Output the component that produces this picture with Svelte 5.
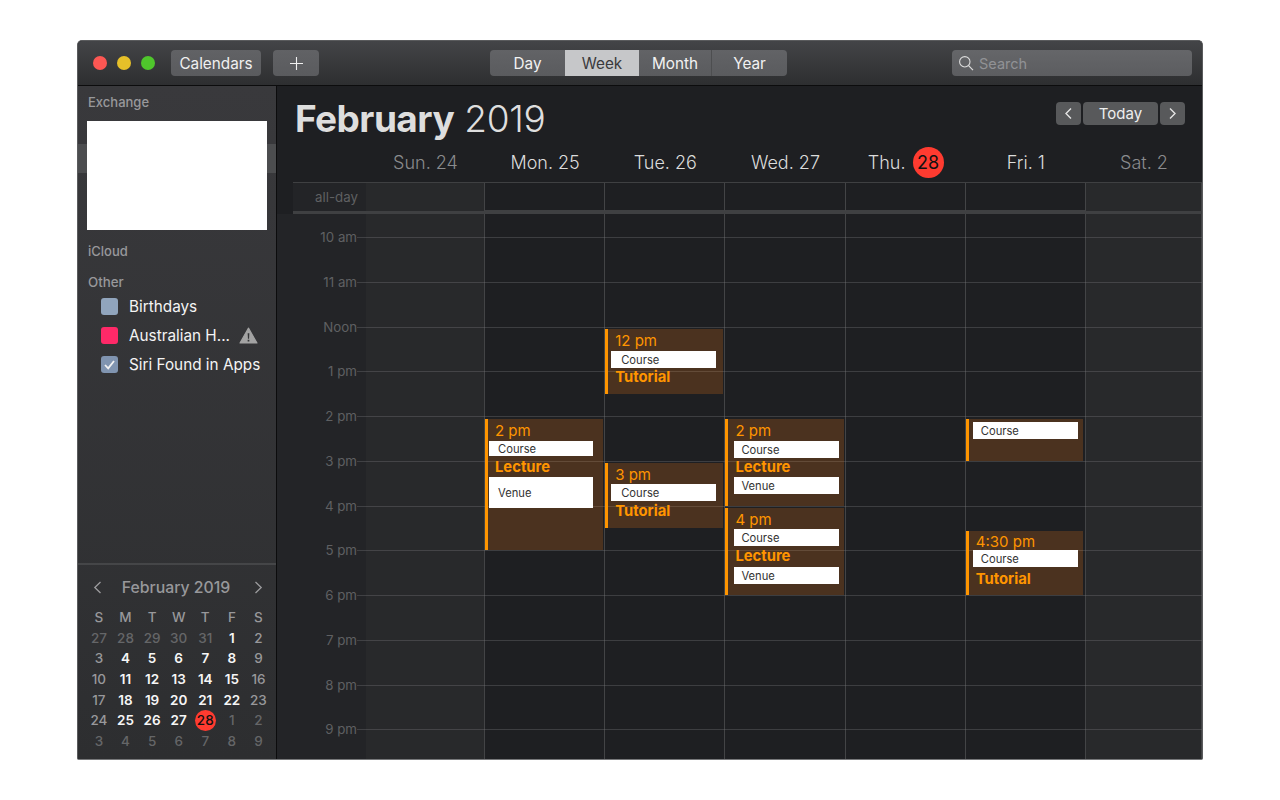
<script lang="ts">
	const days = [
		{ label: 'Sun. 24', tone: 'weekend' },
		{ label: 'Mon. 25', tone: '' },
		{ label: 'Tue. 26', tone: '' },
		{ label: 'Wed. 27', tone: '' },
		{ label: 'Thu.', today: '28', tone: '' },
		{ label: 'Fri. 1', tone: '' },
		{ label: 'Sat. 2', tone: 'weekend' }
	];

	const hours = ['10 am', '11 am', 'Noon', '1 pm', '2 pm', '3 pm', '4 pm', '5 pm', '6 pm', '7 pm', '8 pm', '9 pm'];

	// top and height are px from the top of the hours area, inset, pad and box place the white boxes
	const events = [
		{ col: 1, top: 205, height: 131, width: 118, inset: 1, pad: 9, box: 104, time: '2 pm', kind: 'Lecture', venue: 31, thin: true },
		{ col: 2, top: 115, height: 65, width: 118, inset: 3, pad: 10, box: 105, time: '12 pm', kind: 'Tutorial' },
		{ col: 2, top: 249, height: 65, width: 118, inset: 3, pad: 10, box: 105, time: '3 pm', kind: 'Tutorial', snug: true },
		{ col: 3, top: 205, height: 87, width: 119, inset: 6, pad: 7, box: 105, time: '2 pm', kind: 'Lecture', venue: 17 },
		{ col: 3, top: 294, height: 87, width: 119, inset: 6, pad: 7, box: 105, time: '4 pm', kind: 'Lecture', venue: 17, snug: true },
		{ col: 5, top: 205, height: 42, width: 117, inset: 4, pad: 8, box: 105, kind: '' },
		{ col: 5, top: 317, height: 64, width: 117, inset: 4, pad: 8, box: 105, time: '4:30 pm', kind: 'Tutorial', tight: true }
	];

	const calendars = [
		{ name: 'Birthdays', color: '#91a5bd' },
		{ name: 'Australian H...', color: '#ff2968', warn: true },
		{ name: 'Siri Found in Apps', color: '#8094b0', checked: true }
	];

	const weeks = [
		[27, 28, 29, 30, 31, 1, 2],
		[3, 4, 5, 6, 7, 8, 9],
		[10, 11, 12, 13, 14, 15, 16],
		[17, 18, 19, 20, 21, 22, 23],
		[24, 25, 26, 27, 28, 1, 2],
		[3, 4, 5, 6, 7, 8, 9]
	];

	function dayClass(w: number, d: number) {
		const outside = (w === 0 && d < 5) || (w === 4 && d > 4) || w === 5;
		if (outside) return 'out';
		if (w === 4 && d === 4) return 'today';
		if (d === 0 || d === 6) return 'wknd';
		return 'cur';
	}
</script>

<div class="page">
	<div class="window">
		<header class="toolbar">
			<div class="lights">
				<span class="light red"></span>
				<span class="light yellow"></span>
				<span class="light green"></span>
			</div>
			<button class="tb-btn calendars">Calendars</button>
			<button class="tb-btn plus" aria-label="Add">
				<svg width="15" height="15" viewBox="0 0 15 15"><path d="M7.5 1v13M1 7.5h13" stroke="#f0f0f0" stroke-width="1.1" fill="none" /></svg>
			</button>
			<div class="segments">
				<span class="seg day">Day</span>
				<span class="seg week active">Week</span>
				<span class="seg month">Month</span>
				<span class="seg year">Year</span>
			</div>
			<div class="search">
				<svg width="16" height="16" viewBox="0 0 16 16"><circle cx="6.8" cy="6.8" r="5.2" stroke="#dcdcdc" stroke-width="1.1" fill="none" /><path d="M10.6 10.6l4.4 4.6" stroke="#dcdcdc" stroke-width="1.2" fill="none" /></svg>
				<span>Search</span>
			</div>
		</header>

		<div class="body">
			<aside class="sidebar">
				<div class="group-label first">Exchange</div>
				<div class="exchange">
					<div class="selected-row"></div>
					<div class="redacted"></div>
				</div>
				<div class="group-label">iCloud</div>
				<div class="group-label other">Other</div>
				{#each calendars as cal}
					<div class="cal-row">
						<span class="swatch" style="background: {cal.color}">
							{#if cal.checked}
								<svg width="17" height="17" viewBox="0 0 17 17"><path d="M4 9l3.2 3.4L13 5" stroke="#f2f2f2" stroke-width="1.8" fill="none" /></svg>
							{/if}
						</span>
						<span class="cal-name">{cal.name}</span>
						{#if cal.warn}
							<svg class="warn" width="19" height="17" viewBox="0 0 20 18">
								<path d="M10 1.2L19 17H1z" fill="#a3a3a3" stroke="#a3a3a3" stroke-width="1.2" stroke-linejoin="round" />
								<path d="M9.1 6.5h1.8l-.3 6h-1.2zM9.1 13.6h1.8v1.8H9.1z" fill="#333436" />
							</svg>
						{/if}
					</div>
				{/each}

				<div class="mini">
					<div class="mini-head">
						<svg width="9" height="13" viewBox="0 0 9 13"><path d="M7.5 1L1.8 6.5l5.7 5.5" stroke="#9c9c9e" stroke-width="1.3" fill="none" /></svg>
						<span class="mini-title">February 2019</span>
						<svg width="9" height="13" viewBox="0 0 9 13"><path d="M1.5 1l5.7 5.5L1.5 12" stroke="#9c9c9e" stroke-width="1.3" fill="none" /></svg>
					</div>
					<div class="mini-grid">
						{#each ['S', 'M', 'T', 'W', 'T', 'F', 'S'] as d}
							<span class="dow">{d}</span>
						{/each}
						{#each weeks as week, w}
							{#each week as n, d}
								<span class="mini-day {dayClass(w, d)}">{n}</span>
							{/each}
						{/each}
					</div>
				</div>
			</aside>

			<main class="main">
				<div class="title-row">
					<h1><strong>February</strong> 2019</h1>
					<div class="nav">
						<button class="nav-btn arrow" aria-label="Previous">
							<svg width="9" height="13" viewBox="0 0 9 13"><path d="M7 1.5L2 6.5l5 5" stroke="#e4e4e4" stroke-width="1.4" fill="none" /></svg>
						</button>
						<button class="nav-btn today-btn">Today</button>
						<button class="nav-btn arrow" aria-label="Next">
							<svg width="9" height="13" viewBox="0 0 9 13"><path d="M2 1.5l5 5-5 5" stroke="#e4e4e4" stroke-width="1.4" fill="none" /></svg>
						</button>
					</div>
				</div>

				<div class="cols day-heads">
					<span></span>
					{#each days as day}
						<div class="day-head {day.tone}">
							{day.label}
							{#if day.today}<span class="today-num">{day.today}</span>{/if}
						</div>
					{/each}
				</div>

				<div class="cols allday">
					<div class="gutter allday-label">all-day</div>
					{#each days as day}
						<div class="cell" class:shade={day.tone === 'weekend'}></div>
					{/each}
				</div>

				<div class="cols hours">
					<div class="gutter hour-labels">
						{#each hours as h}
							<div class="hour-label">{h}</div>
						{/each}
					</div>
					{#each days as day, i}
						<div class="cell" class:shade={day.tone === 'weekend'}>
							{#each events.filter((e) => e.col === i) as ev}
								<div
									class="event"
									class:tight={ev.tight}
									class:snug={ev.snug}
									style="top: {ev.top}px; height: {ev.height}px; width: {ev.width}px; --inset: {ev.inset}px; --pad: {ev.pad}px; --box: {ev.box}px"
								>
									{#if ev.time}<div class="ev-time">{ev.time}</div>{/if}
									<div class="ev-box" class:thin={ev.thin}>Course</div>
									{#if ev.kind}<div class="ev-kind">{ev.kind}</div>{/if}
									{#if ev.venue}<div class="ev-box" style="height: {ev.venue}px">Venue</div>{/if}
								</div>
							{/each}
						</div>
					{/each}
					<div class="hour-lines">
						{#each hours as _}
							<div class="hour-line"></div>
						{/each}
					</div>
				</div>
			</main>
		</div>
	</div>
</div>

<style>
	:global(body) {
		margin: 0;
		background: #fff;
	}

	.page {
		width: 1280px;
		height: 800px;
		padding: 40px 77px 0;
		box-sizing: border-box;
		font-family: Inter, 'Liberation Sans', sans-serif;
		overflow: hidden;
	}

	.window {
		width: 1126px;
		height: 720px;
		box-sizing: border-box;
		border: 1px solid #5a5b5d;
		border-bottom-color: #77787a;
		border-radius: 5px 5px 2px 2px;
		overflow: hidden;
		display: flex;
		flex-direction: column;
		background: #1e1f22;
	}

	button {
		font-family: inherit;
		border: 0;
		padding: 0;
		margin: 0;
	}

	.toolbar {
		flex: none;
		height: 45px;
		box-sizing: border-box;
		display: flex;
		align-items: flex-start;
		padding-top: 9px;
		background: linear-gradient(#434447, #2d2e30);
		border-bottom: 1px solid #0c0c0d;
	}

	.lights {
		display: flex;
		gap: 10px;
		margin: 6px 0 0 15px;
	}

	.light {
		width: 14px;
		height: 14px;
		border-radius: 50%;
	}

	.red { background: #fc5753; }
	.yellow { background: #e6c029; }
	.green { background: #4fc62c; }

	.tb-btn {
		height: 26px;
		border-radius: 4px;
		background: linear-gradient(#616265, #5a5b5e);
		color: #f0f0f0;
		font-size: 15.3px;
		display: flex;
		align-items: center;
		justify-content: center;
	}

	.calendars {
		width: 90px;
		margin-left: 16px;
	}

	.plus {
		width: 46px;
		margin-left: 12px;
	}

	.segments {
		display: flex;
		height: 26px;
		margin-left: 171px;
		border-radius: 4px;
		overflow: hidden;
		background: linear-gradient(#626366, #5a5b5e);
		color: #f2f2f2;
		font-size: 15.3px;
	}

	.seg {
		display: flex;
		align-items: center;
		justify-content: center;
	}

	.day { width: 75px; }
	.week { width: 74px; }
	.month { width: 72px; border-right: 1px solid #4d4e50; }
	.year { width: 75px; }

	.active {
		background: #c6c7c9;
		color: #3a3a3c;
	}

	.search {
		display: flex;
		align-items: center;
		gap: 5px;
		width: 240px;
		height: 26px;
		box-sizing: border-box;
		margin-left: 165px;
		padding-left: 6px;
		border-radius: 4px;
		background: linear-gradient(#656669, #5c5d60);
		color: #919295;
		font-size: 14.5px;
	}

	.body {
		flex: 1;
		display: flex;
		min-height: 0;
	}

	.sidebar {
		flex: none;
		width: 199px;
		box-sizing: border-box;
		border-right: 1px solid #0c0c0d;
		display: flex;
		flex-direction: column;
		background: linear-gradient(#39393c, #2d2e30);
	}

	.group-label {
		height: 22px;
		line-height: 22px;
		padding-left: 10px;
		color: #98989b;
		font-size: 13px;
		font-weight: 500;
	}

	.group-label.first {
		margin-top: 5px;
	}

	.group-label.other {
		margin-top: 9px;
		height: 21px;
		font-size: 13.3px;
	}

	.exchange {
		position: relative;
		height: 127px;
		padding-top: 31px;
		box-sizing: border-box;
	}

	.selected-row {
		height: 29px;
		background: #4c4d4f;
	}

	.redacted {
		position: absolute;
		top: 8px;
		left: 9px;
		width: 180px;
		height: 109px;
		background: #fff;
	}

	.cal-row {
		display: flex;
		align-items: center;
		height: 29px;
		padding-left: 23px;
		color: #f4f4f4;
		font-size: 15.3px;
	}

	.swatch {
		flex: none;
		width: 17px;
		height: 17px;
		border-radius: 3px;
		margin-right: 11px;
	}

	.swatch svg {
		display: block;
	}

	.warn {
		margin-left: 9px;
	}

	.mini {
		margin-top: auto;
		height: 196px;
		box-sizing: border-box;
		border-top: 2px solid #454648;
	}

	.mini-head {
		display: flex;
		align-items: center;
		justify-content: space-between;
		height: 24px;
		margin-top: 10px;
		padding: 0 13px 0 15px;
		color: #98989b;
		font-size: 15.8px;
		font-weight: 500;
	}

	.mini-title {
		margin-right: 4px;
	}

	.mini-grid {
		display: grid;
		grid-template-columns: repeat(7, 26.6px);
		grid-auto-rows: 20.6px;
		margin: 8px 0 0 7.6px;
		align-items: center;
		justify-items: center;
		font-size: 13.5px;
		font-weight: 500;
	}

	.dow {
		color: #98989b;
	}

	.mini-day {
		color: #98989b;
	}

	.mini-day.cur {
		color: #f6f6f6;
		font-weight: 600;
	}

	.mini-day.out {
		color: #656668;
	}

	.mini-day.today {
		width: 21px;
		height: 21px;
		line-height: 21px;
		text-align: center;
		border-radius: 50%;
		background: #ff3b30;
		color: #111;
	}

	.main {
		flex: 1;
		min-width: 0;
		display: flex;
		flex-direction: column;
	}

	.title-row {
		flex: none;
		height: 60px;
		display: flex;
		align-items: center;
		justify-content: space-between;
		padding: 0 17px 0 18px;
	}

	h1 {
		margin: 4px 0 0;
		font-size: 37px;
		font-weight: 300;
		color: #dedede;
		letter-spacing: -0.3px;
	}

	h1 strong {
		font-weight: 700;
		letter-spacing: -0.55px;
	}

	.nav {
		display: flex;
		gap: 2px;
		margin-top: -5px;
	}

	.nav-btn {
		height: 23px;
		border-radius: 4px;
		background: #58595b;
		color: #eee;
		font-size: 15px;
		display: flex;
		align-items: center;
		justify-content: center;
	}

	.arrow {
		width: 25px;
	}

	.today-btn {
		width: 75px;
	}

	.cols {
		display: grid;
		grid-template-columns: 73px 119px repeat(5, 120.2px) 1fr;
		margin-left: 16px;
	}

	.day-heads {
		flex: none;
		height: 37px;
		border-bottom: 1px solid #3f4042;
		box-sizing: border-box;
		padding-bottom: 4px;
	}

	.day-head {
		display: flex;
		align-items: center;
		justify-content: center;
		gap: 7px;
		color: #dcdcdc;
		font-size: 18px;
		font-weight: 300;
	}

	.day-head.weekend {
		color: #8a8b8d;
	}

	.today-num {
		width: 31px;
		height: 31px;
		line-height: 31px;
		text-align: center;
		border-radius: 50%;
		background: #ff3b30;
		color: #111;
		font-weight: 400;
	}

	.allday {
		flex: none;
		height: 31px;
		box-sizing: border-box;
		border-bottom: 4px solid #3f4042;
	}

	.gutter {
		background: #232427;
		color: #5f6062;
		font-size: 13.3px;
		text-align: right;
		padding-right: 8px;
	}

	.allday-label {
		line-height: 28px;
	}

	.cell {
		position: relative;
		border-right: 1px solid #434446;
	}

	.cell.shade {
		background: #28292b;
	}

	.hours {
		flex: 1;
		min-height: 0;
		position: relative;
		overflow: hidden;
		margin-left: 0;
		grid-template-columns: 89px 119px repeat(5, 120.2px) 1fr;
	}

	.hour-labels {
		padding-top: 1px;
		padding-right: 9px;
	}

	.hour-label {
		height: 44.75px;
		line-height: 44.75px;
	}

	.event {
		position: absolute;
		left: 0;
		box-sizing: border-box;
		border-left: 3px solid #ff9500;
		background: rgba(255, 130, 20, 0.2);
		padding-top: 3px;
		z-index: 2;
		color: #ff9500;
	}

	.ev-time {
		height: 19px;
		line-height: 18px;
		padding-left: 7px;
		font-size: 15px;
	}

	.tight .ev-time {
		height: 16px;
		line-height: 16px;
	}

	.snug .ev-time {
		height: 18px;
	}

	.ev-box {
		width: var(--box);
		height: 17px;
		box-sizing: border-box;
		margin-left: var(--inset);
		padding-left: var(--pad);
		display: flex;
		align-items: center;
		background: #fff;
		color: #333;
		font-size: 11.2px;
	}

	.ev-box.thin {
		height: 15px;
		margin-bottom: 2px;
	}

	.ev-kind {
		height: 19px;
		line-height: 18px;
		padding-left: 7px;
		font-size: 14.8px;
		font-weight: 700;
	}

	.tight .ev-kind {
		margin-top: 3px;
	}

	.snug .ev-kind {
		margin: 1px 0;
	}

	.hour-lines {
		position: absolute;
		top: 23px;
		left: 80px;
		right: 0;
		pointer-events: none;
		z-index: 1;
	}

	.hour-line {
		height: 44.75px;
		box-sizing: border-box;
		border-top: 1px solid rgba(120, 120, 122, 0.35);
	}
</style>
